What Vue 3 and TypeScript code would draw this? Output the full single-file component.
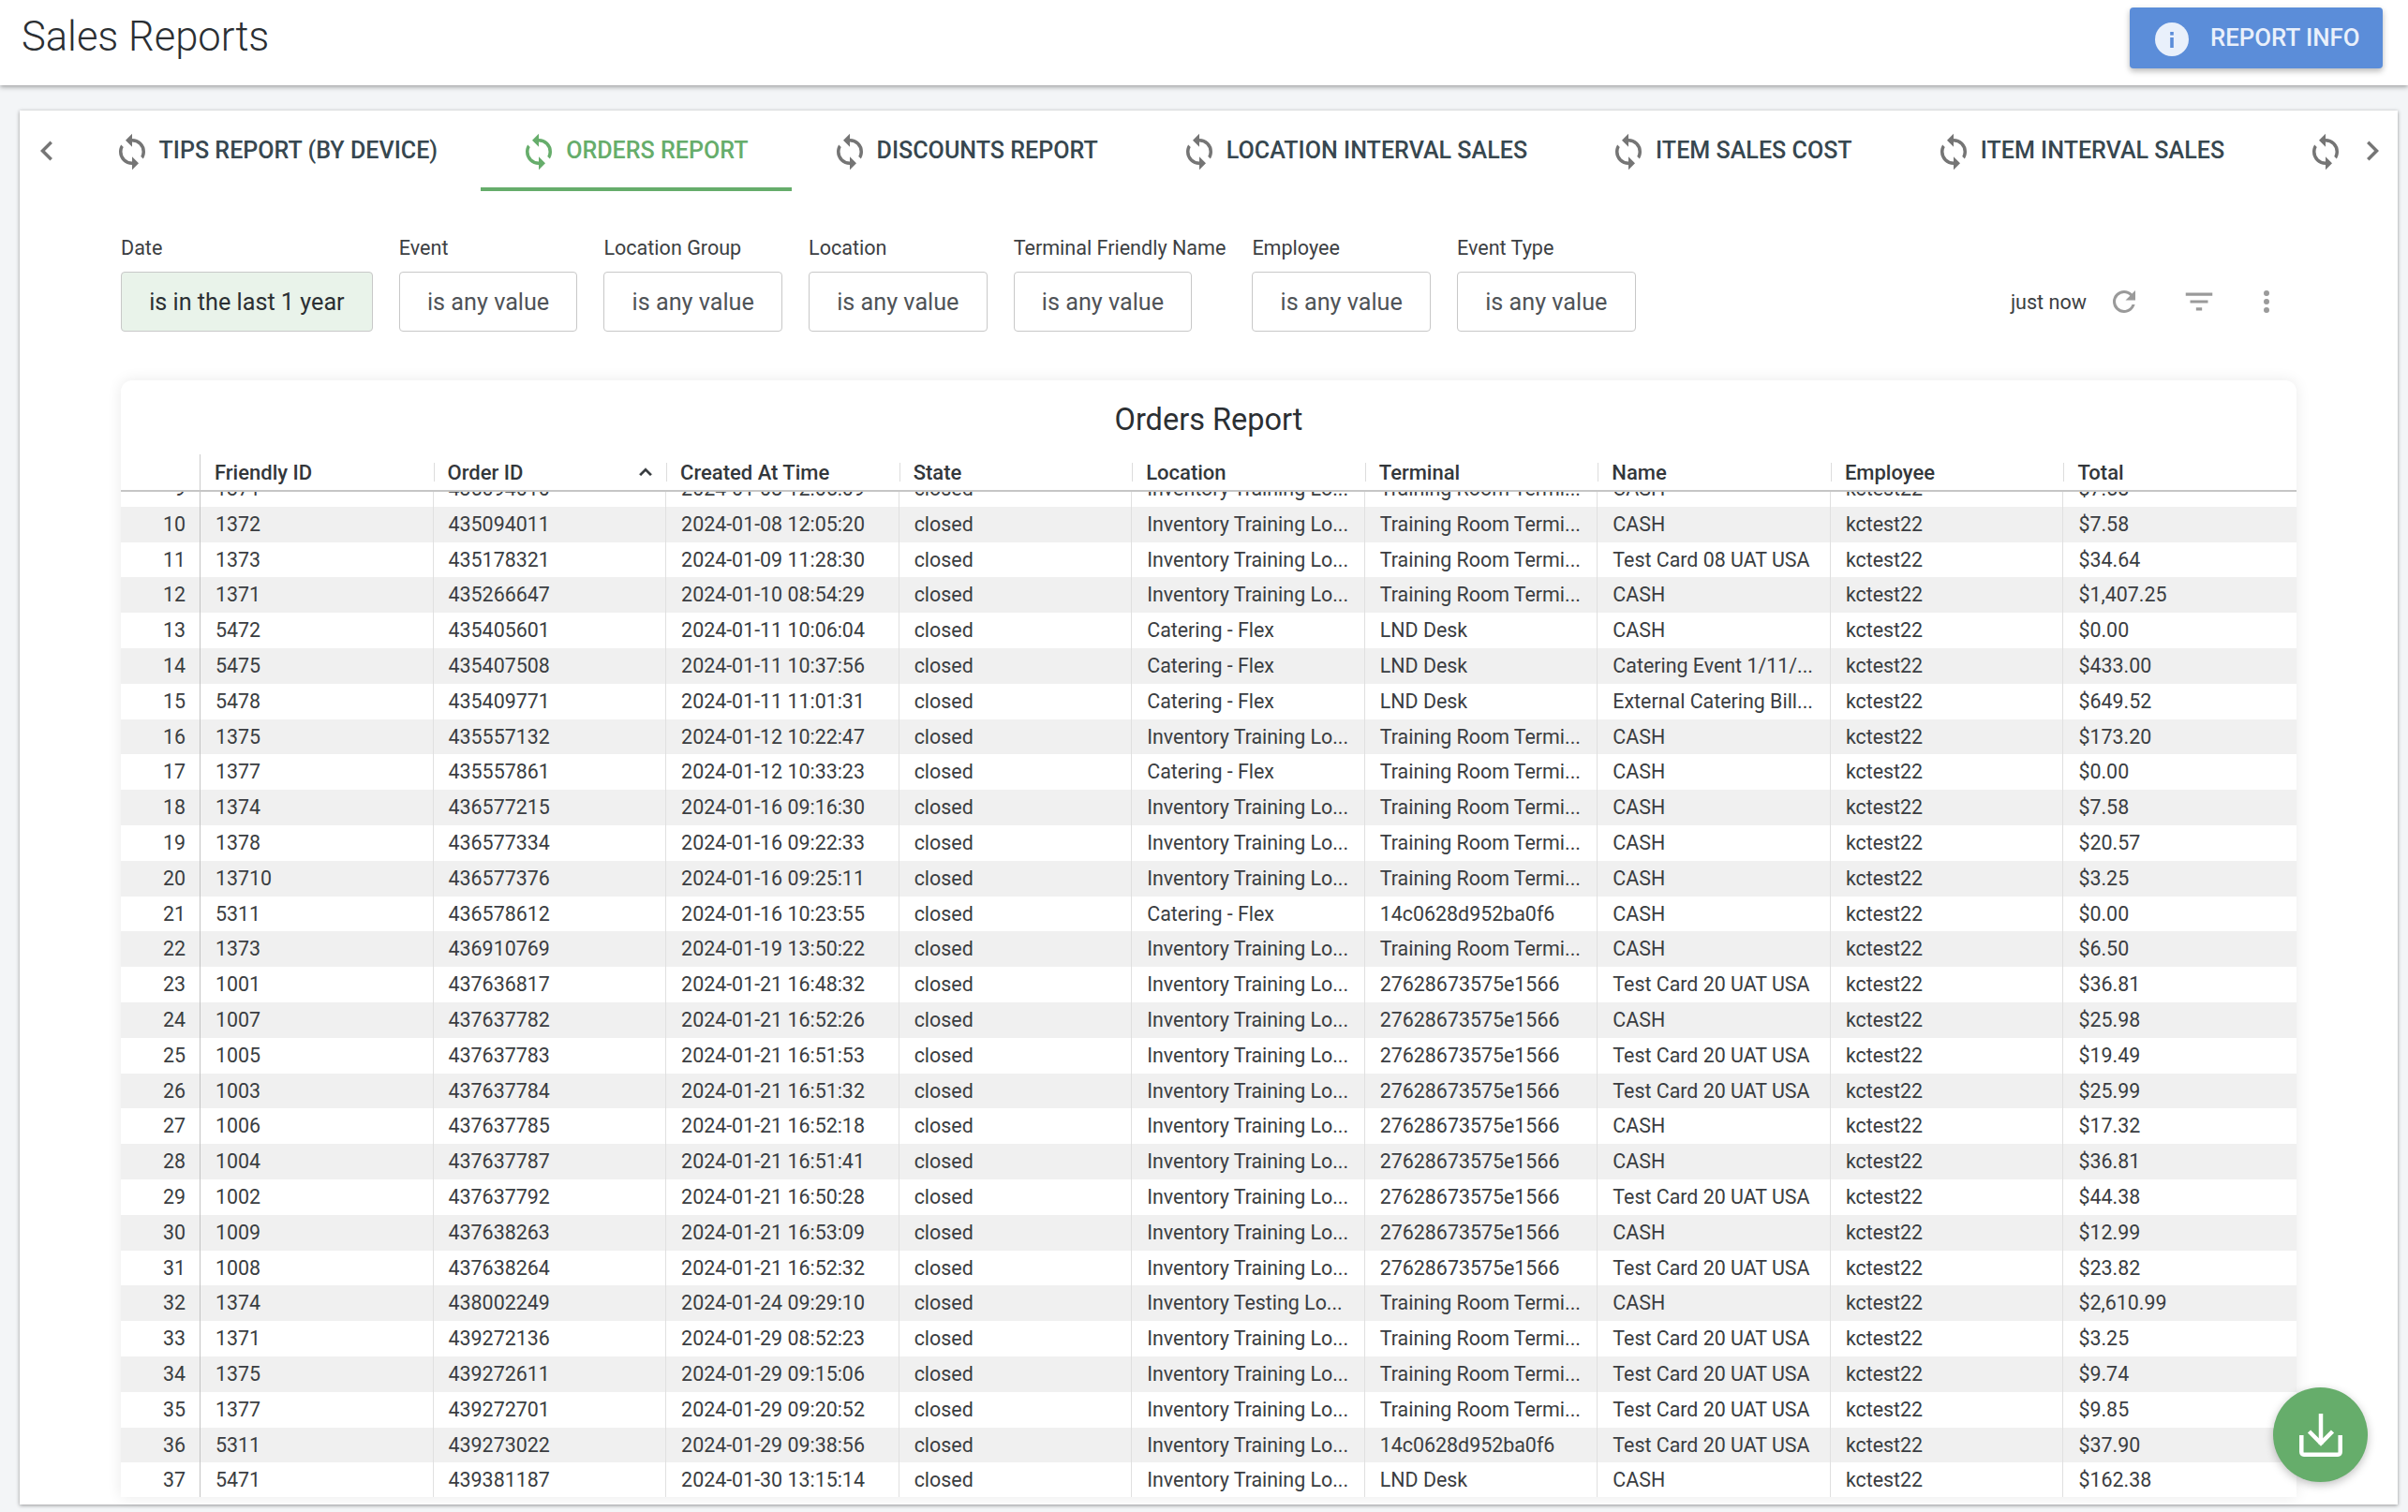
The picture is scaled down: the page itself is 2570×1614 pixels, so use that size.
<template>
  <div class="page">
    <header class="topbar">
      <h1 class="page-title">Sales Reports</h1>
      <button class="info-btn">
        <svg class="info-icon" viewBox="0 0 36 36">
          <circle cx="18" cy="18" r="18" fill="#e9f0fb" />
          <rect x="16.2" y="16" width="3.6" height="11" fill="#5b8dd9" />
          <rect x="16.2" y="10" width="3.6" height="3.6" fill="#5b8dd9" />
        </svg>
        REPORT INFO
      </button>
    </header>

    <main class="content">
      <section class="card">
        <nav class="tabs">
          <div class="tabs-arrow">
            <svg viewBox="0 0 24 24"><path :d="chevronLeft" /></svg>
          </div>
          <div class="tabs-track">
            <div
              v-for="tab in tabs"
              :key="tab"
              class="tab"
              :class="{ active: tab === 'ORDERS REPORT' }"
            >
              <svg class="tab-icon" viewBox="0 0 24 24"><path :d="syncIcon" /></svg>
              <span>{{ tab }}</span>
            </div>
          </div>
          <div class="tabs-arrow right">
            <svg viewBox="0 0 24 24"><path :d="chevronRight" /></svg>
          </div>
        </nav>

        <div class="filters">
          <div v-for="f in filters" :key="f.label" class="filter">
            <label>{{ f.label }}</label>
            <div class="filter-box" :class="{ set: f.set }">{{ f.value }}</div>
          </div>
          <div class="tools">
            <span class="updated">just now</span>
            <svg class="tool refresh" viewBox="0 0 24 24"><path d="M17.65,6.35C16.2,4.9 14.21,4 12,4A8,8 0 0,0 4,12A8,8 0 0,0 12,20C15.73,20 18.84,17.45 19.73,14H17.65C16.83,16.33 14.61,18 12,18A6,6 0 0,1 6,12A6,6 0 0,1 12,6C13.66,6 15.14,6.69 16.22,7.78L13,11H20V4L17.65,6.35Z" /></svg>
            <svg class="tool funnel" viewBox="0 0 24 24"><path d="M6,13H18V11H6M3,6V8H21V6M10,18H14V16H10V18Z" /></svg>
            <svg class="tool dots" viewBox="0 0 24 24"><path d="M12,16A2,2 0 0,1 14,18A2,2 0 0,1 12,20A2,2 0 0,1 10,18A2,2 0 0,1 12,16M12,10A2,2 0 0,1 14,12A2,2 0 0,1 12,14A2,2 0 0,1 10,12A2,2 0 0,1 12,10M12,4A2,2 0 0,1 14,6A2,2 0 0,1 12,8A2,2 0 0,1 10,6A2,2 0 0,1 12,4Z" /></svg>
          </div>
        </div>

        <div class="panel">
          <h2 class="panel-title">Orders Report</h2>
          <div class="grid head">
            <div class="hcell corner"></div>
            <div v-for="col in columns" :key="col" class="hcell">
              <span>{{ col }}</span>
              <svg v-if="col === 'Order ID'" class="sort" viewBox="0 0 24 24"><path d="M7.41,15.41L12,10.83L16.59,15.41L18,14L12,8L6,14L7.41,15.41Z" /></svg>
            </div>
          </div>
          <div class="body">
            <div class="rows">
              <div v-for="row in rows" :key="row.n" class="grid row">
                <div class="cell num">{{ row.n }}</div>
                <div v-for="(val, i) in row.cells" :key="i" class="cell">{{ val }}</div>
              </div>
            </div>
          </div>
        </div>
      </section>
    </main>

    <button class="fab">
      <svg viewBox="0 0 46 46" fill="none" stroke="#fff" stroke-width="4.5">
        <path d="M2.3 23V41A2.8 2.8 0 0 0 5 43.7H41A2.8 2.8 0 0 0 43.7 41V23" />
        <path d="M23 0V33" />
        <path d="M10.5 19L23 31.5L35.5 19" />
      </svg>
    </button>
  </div>
</template>

<script setup lang="ts">
const syncIcon =
  'M12,18A6,6 0 0,1 6,12C6,11 6.25,10.03 6.7,9.2L5.24,7.74C4.46,8.97 4,10.43 4,12A8,8 0 0,0 12,20V23L16,19L12,15M12,4V1L8,5L12,9V6A6,6 0 0,1 18,12C18,13 17.75,13.97 17.3,14.8L18.76,16.26C19.54,15.03 20,13.57 20,12A8,8 0 0,0 12,4Z'
const chevronLeft = 'M15.41,16.58L10.83,12L15.41,7.41L14,6L8,12L14,18Z'
const chevronRight = 'M8.59,16.58L13.17,12L8.59,7.41L10,6L16,12L10,18Z'

const tabs = [
  'TIPS REPORT (BY DEVICE)',
  'ORDERS REPORT',
  'DISCOUNTS REPORT',
  'LOCATION INTERVAL SALES',
  'ITEM SALES COST',
  'ITEM INTERVAL SALES',
  'ITEM SALES'
]

const filters = [
  { label: 'Date', value: 'is in the last 1 year', set: true },
  { label: 'Event', value: 'is any value', set: false },
  { label: 'Location Group', value: 'is any value', set: false },
  { label: 'Location', value: 'is any value', set: false },
  { label: 'Terminal Friendly Name', value: 'is any value', set: false },
  { label: 'Employee', value: 'is any value', set: false },
  { label: 'Event Type', value: 'is any value', set: false }
]

const columns = [
  'Friendly ID',
  'Order ID',
  'Created At Time',
  'State',
  'Location',
  'Terminal',
  'Name',
  'Employee',
  'Total'
]

const INV = 'Inventory Training Lo...'
const CAT = 'Catering - Flex'
const ROOM = 'Training Room Termi...'
const LND = 'LND Desk'
const T14 = '14c0628d952ba0f6'
const T27 = '27628673575e1566'
const TC20 = 'Test Card 20 UAT USA'

type Raw = [string, string, string, string, string, string, string]

const raw: Raw[] = [
  ['1371', '435094010', '2024-01-08 12:05:09', INV, ROOM, 'CASH', '$7.58'],
  ['1372', '435094011', '2024-01-08 12:05:20', INV, ROOM, 'CASH', '$7.58'],
  ['1373', '435178321', '2024-01-09 11:28:30', INV, ROOM, 'Test Card 08 UAT USA', '$34.64'],
  ['1371', '435266647', '2024-01-10 08:54:29', INV, ROOM, 'CASH', '$1,407.25'],
  ['5472', '435405601', '2024-01-11 10:06:04', CAT, LND, 'CASH', '$0.00'],
  ['5475', '435407508', '2024-01-11 10:37:56', CAT, LND, 'Catering Event 1/11/...', '$433.00'],
  ['5478', '435409771', '2024-01-11 11:01:31', CAT, LND, 'External Catering Bill...', '$649.52'],
  ['1375', '435557132', '2024-01-12 10:22:47', INV, ROOM, 'CASH', '$173.20'],
  ['1377', '435557861', '2024-01-12 10:33:23', CAT, ROOM, 'CASH', '$0.00'],
  ['1374', '436577215', '2024-01-16 09:16:30', INV, ROOM, 'CASH', '$7.58'],
  ['1378', '436577334', '2024-01-16 09:22:33', INV, ROOM, 'CASH', '$20.57'],
  ['13710', '436577376', '2024-01-16 09:25:11', INV, ROOM, 'CASH', '$3.25'],
  ['5311', '436578612', '2024-01-16 10:23:55', CAT, T14, 'CASH', '$0.00'],
  ['1373', '436910769', '2024-01-19 13:50:22', INV, ROOM, 'CASH', '$6.50'],
  ['1001', '437636817', '2024-01-21 16:48:32', INV, T27, TC20, '$36.81'],
  ['1007', '437637782', '2024-01-21 16:52:26', INV, T27, 'CASH', '$25.98'],
  ['1005', '437637783', '2024-01-21 16:51:53', INV, T27, TC20, '$19.49'],
  ['1003', '437637784', '2024-01-21 16:51:32', INV, T27, TC20, '$25.99'],
  ['1006', '437637785', '2024-01-21 16:52:18', INV, T27, 'CASH', '$17.32'],
  ['1004', '437637787', '2024-01-21 16:51:41', INV, T27, 'CASH', '$36.81'],
  ['1002', '437637792', '2024-01-21 16:50:28', INV, T27, TC20, '$44.38'],
  ['1009', '437638263', '2024-01-21 16:53:09', INV, T27, 'CASH', '$12.99'],
  ['1008', '437638264', '2024-01-21 16:52:32', INV, T27, TC20, '$23.82'],
  ['1374', '438002249', '2024-01-24 09:29:10', 'Inventory Testing Lo...', ROOM, 'CASH', '$2,610.99'],
  ['1371', '439272136', '2024-01-29 08:52:23', INV, ROOM, TC20, '$3.25'],
  ['1375', '439272611', '2024-01-29 09:15:06', INV, ROOM, TC20, '$9.74'],
  ['1377', '439272701', '2024-01-29 09:20:52', INV, ROOM, TC20, '$9.85'],
  ['5311', '439273022', '2024-01-29 09:38:56', INV, T14, TC20, '$37.90'],
  ['5471', '439381187', '2024-01-30 13:15:14', INV, LND, 'CASH', '$162.38']
]

// list starts at row 9, the table is scrolled a little
const rows = raw.map((r, i) => ({
  n: i + 9,
  cells: [r[0], r[1], r[2], 'closed', r[3], r[4], r[5], 'kctest22', r[6]]
}))
</script>

<style>
html,
body {
  margin: 0;
  background: #f3f5f7;
}
</style>

<style scoped>
.page {
  position: relative;
  width: 2570px;
  height: 1614px;
  overflow: hidden;
  display: flex;
  flex-direction: column;
  background: #f3f5f7;
  font-family: Roboto, 'Liberation Sans', sans-serif;
  color: #333;
}

.topbar {
  flex: none;
  height: 91px;
  box-sizing: border-box;
  padding: 0 27px 0 23px;
  display: flex;
  align-items: flex-start;
  justify-content: space-between;
  background: #fff;
  box-shadow: 0 2px 5px rgba(0, 0, 0, 0.35);
  position: relative;
  z-index: 1;
}

.page-title {
  margin: 15px 0 0;
  font-size: 43.5px;
  line-height: 50px;
  font-weight: 300;
  color: #2b2f33;
}

.info-btn {
  margin-top: 8px;
  width: 270px;
  height: 65px;
  display: flex;
  align-items: center;
  padding: 0 0 2px 27px;
  gap: 23px;
  border: 0;
  border-radius: 4px;
  background: #5b8dd9;
  color: #e9f0fb;
  font-family: inherit;
  font-size: 25.8px;
  font-weight: 500;
  box-shadow: 0 3px 6px rgba(0, 0, 0, 0.28);
}

.info-icon {
  width: 36px;
  height: 36px;
  flex: none;
  margin-top: 4px;
}

.content {
  flex: 1;
  min-height: 0;
  display: flex;
  padding: 27px 11px 8px 21px;
}

.card {
  flex: 1;
  min-width: 0;
  display: flex;
  flex-direction: column;
  background: #fff;
  box-shadow: 0 1px 4px rgba(0, 0, 0, 0.4);
}

.tabs {
  flex: none;
  height: 86px;
  display: flex;
}

.tabs-arrow {
  flex: none;
  width: 57.5px;
  padding-right: 0.5px;
  box-sizing: border-box;
  display: flex;
  align-items: center;
  justify-content: center;
}

.tabs-arrow.right {
  width: 54px;
  padding-right: 0;
}

.tabs-arrow svg {
  width: 42px;
  height: 42px;
  margin-bottom: 1px;
  fill: #757575;
}

.tabs-track {
  flex: 1;
  min-width: 0;
  display: flex;
  overflow: hidden;
}

.tab {
  flex: none;
  box-sizing: border-box;
  display: flex;
  align-items: center;
  gap: 8px;
  padding: 2px 46px 0 41px;
  border-bottom: 4px solid transparent;
  font-size: 25.1px;
  font-weight: 500;
  color: #37474f;
}

.tab-icon {
  width: 42px;
  height: 42px;
  margin-top: 4px;
  fill: #757575;
}

.tab.active {
  color: #66ad6b;
  border-bottom-color: #66ad6b;
}

.tab.active .tab-icon {
  fill: #66ad6b;
}

.filters {
  flex: none;
  margin-top: 49px;
  padding: 0 122px 0 108px;
  display: flex;
  align-items: flex-end;
  gap: 28px;
}

.filter label {
  display: block;
  margin-bottom: 13px;
  font-size: 21.55px;
  line-height: 24px;
  color: #3c4043;
}

.filter-box {
  width: fit-content;
  box-sizing: border-box;
  height: 64px;
  padding: 0 29.2px;
  display: flex;
  align-items: center;
  border: 1px solid #c8c8c8;
  border-radius: 4px;
  font-size: 25.2px;
  color: #4f5357;
}

.filter-box.set {
  background: #e9f3ea;
  color: #2b2f33;
}

.tools {
  margin-left: auto;
  height: 64px;
  display: flex;
  align-items: center;
}

.updated {
  font-size: 21.6px;
  color: #3c4043;
}

.tool {
  fill: #9a9a9a;
  flex: none;
}

.refresh {
  width: 36px;
  height: 36px;
  margin-left: 22px;
}

.funnel {
  width: 38px;
  height: 38px;
  margin-left: 43px;
}

.dots {
  width: 36px;
  height: 36px;
  margin-left: 35px;
}

.panel {
  flex: 1;
  min-height: 0;
  margin: 52px 108px 8px 108px;
  display: flex;
  flex-direction: column;
  border-radius: 12px 12px 0 0;
  background: #fff;
  box-shadow: 0 0 16px rgba(0, 0, 0, 0.09);
}

.panel-title {
  flex: none;
  margin: 22px 0 17px;
  text-align: center;
  font-size: 32.5px;
  line-height: 40px;
  font-weight: 400;
  color: #2b2f33;
}

.grid {
  display: grid;
  grid-template-columns: 85px repeat(9, 1fr);
}

.head {
  flex: none;
  height: 40px;
  box-sizing: border-box;
  align-items: center;
  border-bottom: 2px solid #c6c6c6;
}

.hcell {
  height: 20px;
  box-sizing: border-box;
  padding: 0 14px;
  display: flex;
  align-items: center;
  justify-content: space-between;
  border-left: 1px solid #ddd;
  font-size: 22px;
  font-weight: 500;
  color: #33373b;
}

.hcell.corner {
  height: 100%;
  border-left: 0;
  border-right: 1px solid #ccc;
}

.hcell:nth-child(2) {
  border-left: 0;
  padding-left: 15px;
}

.sort {
  width: 26px;
  height: 26px;
  margin-right: -5px;
  fill: #33373b;
  stroke: #33373b;
  stroke-width: 0.6;
}

.body {
  flex: 1;
  min-height: 0;
  overflow: hidden;
}

.rows {
  margin-top: -22px;
}

.row {
  height: 37.8px;
}

.row:nth-child(even) {
  background: #f0f0f0;
}

.cell {
  box-sizing: border-box;
  padding: 0 15px 0 16px;
  line-height: 37.8px;
  font-size: 21.4px;
  color: #3a3d41;
  white-space: nowrap;
  overflow: hidden;
  border-right: 1px solid #e0e0e0;
}

.cell.num {
  text-align: right;
  border-right-color: #c4c4c4;
}

.cell:last-child {
  border-right: 0;
}

.fab {
  position: absolute;
  left: 2426px;
  top: 1481px;
  width: 101px;
  height: 101px;
  padding: 0;
  display: flex;
  align-items: center;
  justify-content: center;
  border: 0;
  border-radius: 50%;
  background: #66ad6b;
  box-shadow: 0 3px 10px rgba(0, 0, 0, 0.25);
}

.fab svg {
  width: 46px;
  height: 46px;
}
</style>
